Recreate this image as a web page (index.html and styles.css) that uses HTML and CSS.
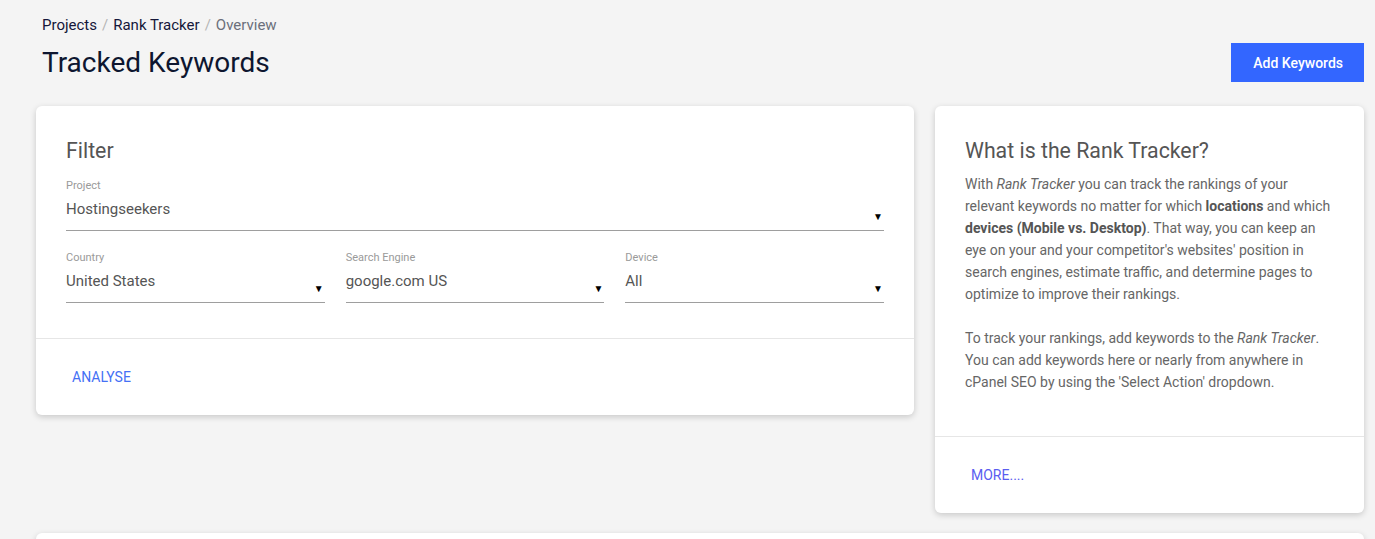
FILE: index.html
```html
<!doctype html>
<html lang="en">
  <head>
    <meta charset="utf-8">
    <meta name="viewport" content="width=device-width, initial-scale=1, shrink-to-fit=no">
    <title>Tracked Keywords</title>
    <link rel="stylesheet" href="styles.css">
  </head>
  <body>
    <div class="page">
      <div class="header">
        <div class="breadcrumb">
          <a href="#">Projects</a><span class="sep">/</span><a href="#">Rank Tracker</a><span class="sep">/</span><span class="current">Overview</span>
        </div>
        <div class="title-row">
          <h1>Tracked Keywords</h1>
          <button type="button" class="primary">Add Keywords</button>
        </div>
      </div>

      <div class="cards">
        <div class="card filter">
          <div class="card-body">
            <h2>Filter</h2>
            <div class="field">
              <label>Project</label>
              <div class="select"><span>Hostingseekers</span><i class="arrow">▼</i></div>
            </div>
            <div class="field-row">
              <div class="field">
                <label>Country</label>
                <div class="select"><span>United States</span><i class="arrow">▼</i></div>
              </div>
              <div class="field">
                <label>Search Engine</label>
                <div class="select"><span>google.com US</span><i class="arrow">▼</i></div>
              </div>
              <div class="field">
                <label>Device</label>
                <div class="select"><span>All</span><i class="arrow">▼</i></div>
              </div>
            </div>
          </div>
          <div class="card-footer">
            <button type="button" class="flat">Analyse</button>
          </div>
        </div>

        <div class="card info">
          <div class="card-body">
            <h2>What is the Rank Tracker?</h2>
            <p>With <em>Rank Tracker</em> you can track the rankings of your relevant keywords no matter for which <b>locations</b> and which <b>devices (Mobile vs. Desktop)</b>. That way, you can keep an eye on your and your competitor's websites' position in search engines, estimate traffic, and determine pages to optimize to improve their rankings.</p>
            <p>To track your rankings, add keywords to the <em>Rank Tracker</em>. You can add keywords here or nearly from anywhere in cPanel SEO by using the 'Select Action' dropdown.</p>
          </div>
          <div class="card-footer">
            <button type="button" class="flat more">More....</button>
          </div>
        </div>
      </div>

      <div class="card table-card"></div>
    </div>
  </body>
</html>
```

FILE: styles.css
```css
body {
  margin: 0;
  background-color: #f4f4f4;
  font-family: Roboto, "Liberation Sans", Arial, sans-serif;
  color: #555;
}
.page {
  padding: 16px 11px 0 36px;
}
.header {
  padding-left: 6px;
}
.breadcrumb {
  font-size: 15px;
  line-height: 18px;
  color: #6b6f7b;
}
.breadcrumb a {
  color: #15173a;
  text-decoration: none;
}
.breadcrumb .sep {
  color: #b5b5b5;
  margin: 0 5px;
}
.title-row {
  display: flex;
  justify-content: space-between;
  align-items: center;
  margin-top: 9px;
}
h1 {
  margin: 0;
  font-size: 28px;
  font-weight: 400;
  line-height: 34px;
  color: #0d1630;
}
.primary {
  height: 39px;
  padding: 0 21px 0 22px;
  border: none;
  background-color: #3366ff;
  color: white;
  font-family: inherit;
  font-size: 14px;
  font-weight: 500;
  cursor: pointer;
}
.cards {
  display: flex;
  align-items: flex-start;
  gap: 21px;
  margin-top: 24px;
}
.card {
  background: white;
  border-radius: 6px;
  box-shadow: 0 2px 6px rgba(0, 0, 0, 0.18);
}
.filter {
  flex: 0 0 878px;
}
.info {
  flex: 1;
}
.card-body {
  padding: 31px 30px 35px;
}
.info .card-body {
  padding-bottom: 21px;
}
h2 {
  margin: 0;
  font-size: 21.3px;
  font-weight: 400;
  line-height: 28px;
  color: #555;
}
.filter h2 {
  margin-bottom: 14px;
}
.info h2 {
  margin-bottom: 8px;
}
.field label {
  display: block;
  font-size: 11px;
  line-height: 14px;
  color: #9a9a9a;
}
.select {
  display: flex;
  height: 38px;
  box-sizing: border-box;
  padding-top: 5px;
  border-bottom: 1px solid #9e9e9e;
  font-size: 15px;
  line-height: 22px;
  color: #555;
}
.select span {
  flex: 1;
}
.arrow {
  font-style: normal;
  font-size: 10px;
  line-height: 12px;
  color: #000;
  align-self: flex-end;
  margin: 0 1px 7px 0;
}
.field-row {
  display: grid;
  grid-template-columns: 1fr 1fr 1fr;
  gap: 21px;
  margin-top: 20px;
}
p {
  margin: 0 0 22px;
  font-size: 14px;
  line-height: 22px;
  color: #666;
}
p b {
  color: #555;
}
.card-footer {
  border-top: 1px solid #e6e6e6;
  height: 76px;
  display: flex;
  align-items: center;
  padding: 0 30px;
}
.flat {
  border: none;
  background: none;
  padding: 0 6px;
  font-family: inherit;
  font-size: 14px;
  text-transform: uppercase;
  color: #4570f5;
  cursor: pointer;
}
.flat.more {
  color: #5a5df0;
}
.table-card {
  margin-top: 20px;
  height: 40px;
  border-radius: 6px 6px 0 0;
}
```
